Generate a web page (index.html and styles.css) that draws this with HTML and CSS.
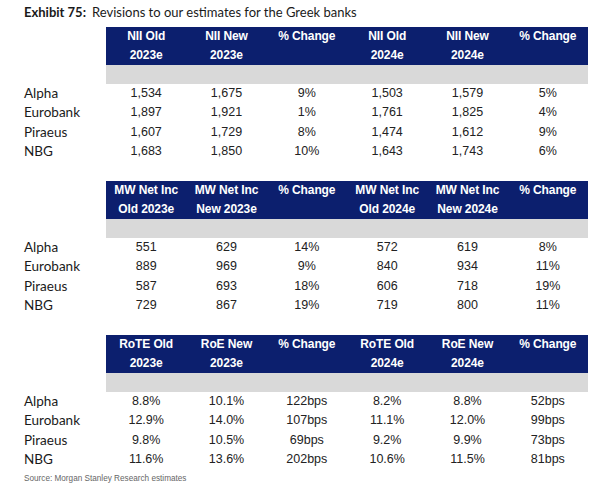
FILE: index.html
```html
<!DOCTYPE html>
<html>
<head>
<meta charset="utf-8">
<link rel="stylesheet" href="styles.css">
</head>
<body>
<div class="page">
  <div class="title"><b>Exhibit 75:</b><span class="sub">Revisions to our estimates for the Greek banks</span></div>

  <div class="block">
    <div class="head">
      <div>NII Old<br>2023e</div>
      <div>NII New<br>2023e</div>
      <div>% Change</div>
      <div>NII Old<br>2024e</div>
      <div>NII New<br>2024e</div>
      <div>% Change</div>
    </div>
    <div class="band"></div>
    <div class="row"><span class="lbl">Alpha</span><span>1,534</span><span>1,675</span><span>9%</span><span>1,503</span><span>1,579</span><span>5%</span></div>
    <div class="row"><span class="lbl">Eurobank</span><span>1,897</span><span>1,921</span><span>1%</span><span>1,761</span><span>1,825</span><span>4%</span></div>
    <div class="row"><span class="lbl">Piraeus</span><span>1,607</span><span>1,729</span><span>8%</span><span>1,474</span><span>1,612</span><span>9%</span></div>
    <div class="row"><span class="lbl">NBG</span><span>1,683</span><span>1,850</span><span>10%</span><span>1,643</span><span>1,743</span><span>6%</span></div>
  </div>

  <div class="block">
    <div class="head">
      <div>MW Net Inc<br>Old 2023e</div>
      <div>MW Net Inc<br>New 2023e</div>
      <div>% Change</div>
      <div>MW Net Inc<br>Old 2024e</div>
      <div>MW Net Inc<br>New 2024e</div>
      <div>% Change</div>
    </div>
    <div class="band"></div>
    <div class="row"><span class="lbl">Alpha</span><span>551</span><span>629</span><span>14%</span><span>572</span><span>619</span><span>8%</span></div>
    <div class="row"><span class="lbl">Eurobank</span><span>889</span><span>969</span><span>9%</span><span>840</span><span>934</span><span>11%</span></div>
    <div class="row"><span class="lbl">Piraeus</span><span>587</span><span>693</span><span>18%</span><span>606</span><span>718</span><span>19%</span></div>
    <div class="row"><span class="lbl">NBG</span><span>729</span><span>867</span><span>19%</span><span>719</span><span>800</span><span>11%</span></div>
  </div>

  <div class="block block-last">
    <div class="head">
      <div>RoTE Old<br>2023e</div>
      <div>RoE New<br>2023e</div>
      <div>% Change</div>
      <div>RoTE Old<br>2024e</div>
      <div>RoE New<br>2024e</div>
      <div>% Change</div>
    </div>
    <div class="band"></div>
    <div class="row"><span class="lbl">Alpha</span><span>8.8%</span><span>10.1%</span><span>122bps</span><span>8.2%</span><span>8.8%</span><span>52bps</span></div>
    <div class="row"><span class="lbl">Eurobank</span><span>12.9%</span><span>14.0%</span><span>107bps</span><span>11.1%</span><span>12.0%</span><span>99bps</span></div>
    <div class="row"><span class="lbl">Piraeus</span><span>9.8%</span><span>10.5%</span><span>69bps</span><span>9.2%</span><span>9.9%</span><span>73bps</span></div>
    <div class="row"><span class="lbl">NBG</span><span>11.6%</span><span>13.6%</span><span>202bps</span><span>10.6%</span><span>11.5%</span><span>81bps</span></div>
  </div>

  <div class="source">Source: Morgan Stanley Research estimates</div>
</div>
</body>
</html>
```
FILE: styles.css
```css
html, body {
  margin: 0;
  padding: 0;
  background: #ffffff;
}
.page {
  padding: 3px 0 0 24px;
  width: 564px;
  color: #1c1c1c;
}
.title {
  font-family: "Lato", "Open Sans", sans-serif;
  font-size: 13px;
  line-height: 18px;
  height: 18px;
  margin-bottom: 6px;
  color: #1a1a1a;
  white-space: nowrap;
}
.title b {
  font-weight: 700;
}
.title .sub {
  margin-left: 6px;
}
.block {
  margin-bottom: 19.7px;
}
.block-last {
  margin-bottom: 0;
}
.head {
  margin-left: 82px;
  background: #0c1f6e;
  display: grid;
  grid-template-columns: repeat(6, 1fr);
  height: 38px;
}
.head div {
  color: #ffffff;
  font-family: "Liberation Sans", Arial, sans-serif;
  font-weight: 700;
  font-size: 12px;
  line-height: 19px;
  text-align: center;
  letter-spacing: -0.1px;
  white-space: nowrap;
}
.band {
  margin-left: 82px;
  background: #d9d9d9;
  height: 19px;
}
.row {
  display: grid;
  grid-template-columns: 82px repeat(6, 1fr);
  height: 19.33px;
  line-height: 19.33px;
  font-family: "Liberation Sans", Arial, sans-serif;
  font-size: 12.5px;
  color: #222222;
}
.row span {
  text-align: center;
  white-space: nowrap;
}
.row .lbl {
  text-align: left;
  font-family: "Lato", "Open Sans", sans-serif;
  font-size: 13.5px;
  color: #1a1a1a;
}
.source {
  margin-top: 4px;
  font-family: "Liberation Sans", Arial, sans-serif;
  font-size: 8.2px;
  line-height: 12px;
  color: #666666;
  white-space: nowrap;
}
```
